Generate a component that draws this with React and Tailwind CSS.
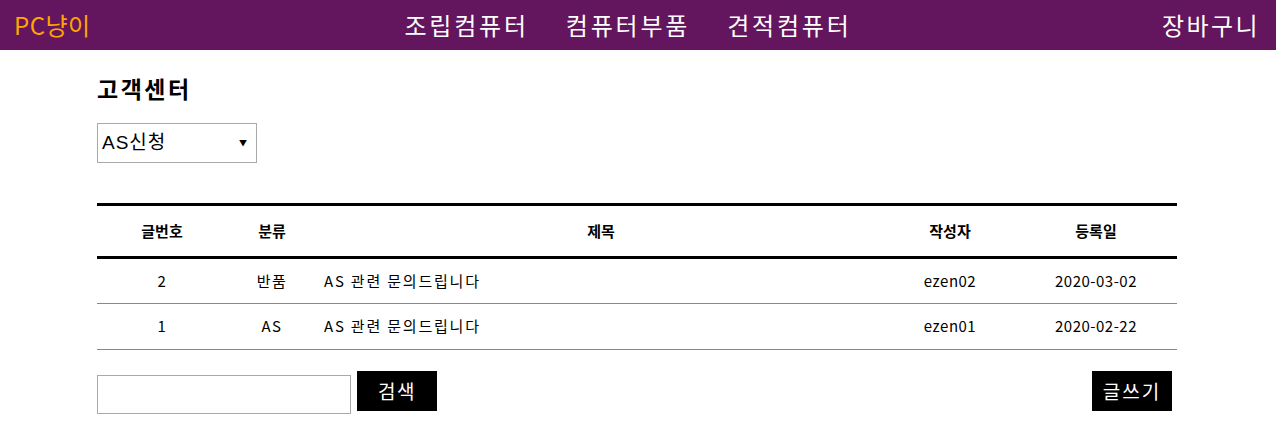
import { useState } from "react";

const posts = [
  { no: 2, category: "반품", title: "AS 관련 문의드립니다", writer: "ezen02", date: "2020-03-02" },
  { no: 1, category: "AS", title: "AS 관련 문의드립니다", writer: "ezen01", date: "2020-02-22" },
];

const font = { fontFamily: '"Noto Sans CJK KR", "Noto Sans", sans-serif' };

const Header = () => (
  <header className="h-[50px] bg-[#63165e] flex items-center px-[14px]">
    <div className="flex-1">
      <a className="text-[24px] leading-[30px] text-[#ffa500] tracking-[0.5px]">PC냥이</a>
    </div>
    <nav className="flex gap-[37px] text-[24px] leading-[30px] text-white tracking-[2.8px] mr-[18px]">
      <a>조립컴퓨터</a>
      <a>컴퓨터부품</a>
      <a>견적컴퓨터</a>
    </nav>
    <div className="flex-1 flex justify-end pr-[2px]">
      <a className="text-[24px] leading-[30px] text-white tracking-[2.4px]">장바구니</a>
    </div>
  </header>
);

export default function App() {
  const [keyword, setKeyword] = useState("");

  return (
    <div className="bg-white min-h-[444px] text-black" style={font}>
      <Header />
      <main className="w-[1080px] ml-[97px]">
        <h2 className="text-[23px] leading-[30px] font-bold tracking-[2.5px] mt-[23px]">고객센터</h2>
        <div className="relative mt-[20px] w-[160px] h-[40px] border border-[#aaaaaa] flex items-center px-[4px]">
          <span
            className="text-[19px] leading-[24px] tracking-[1px]"
            style={{ fontFamily: '"Liberation Sans", "Noto Sans CJK KR", sans-serif' }}
          >
            AS신청
          </span>
          <span className="absolute right-[9px] top-[15px] text-[8px] leading-[8px]">▼</span>
        </div>

        <table className="w-full mt-[40px] border-collapse text-[15px] tracking-[0.5px] table-fixed">
          <colgroup>
            <col className="w-[130px]" />
            <col className="w-[90px]" />
            <col />
            <col className="w-[130px]" />
            <col className="w-[162px]" />
          </colgroup>
          <thead>
            <tr className="border-t-[3px] border-b-[3px] border-black h-[53px]">
              <th className="font-semibold tracking-normal">글번호</th>
              <th className="font-semibold tracking-normal">분류</th>
              <th className="font-semibold tracking-normal">제목</th>
              <th className="font-semibold tracking-normal">작성자</th>
              <th className="font-semibold tracking-normal">등록일</th>
            </tr>
          </thead>
          <tbody>
            {posts.map((p) => (
              <tr key={p.no} className="border-b border-[#888888] h-[46px]">
                <td className="text-center">{p.no}</td>
                <td className="text-center tracking-[1.5px]">{p.category}</td>
                <td className="text-left pl-[7px] tracking-[1.8px]">{p.title}</td>
                <td className="text-center">{p.writer}</td>
                <td className="text-center">{p.date}</td>
              </tr>
            ))}
          </tbody>
        </table>

        <div className="flex items-start justify-between mt-[21px] pr-[5px]">
          <div className="flex items-start gap-[6px]">
            <input
              value={keyword}
              onChange={(e) => setKeyword(e.target.value)}
              className="mt-[4px] w-[254px] h-[39px] border border-[#aaaaaa] outline-none px-2"
            />
            <button className="w-[80px] h-[40px] bg-black text-white text-[19px] leading-[24px] tracking-[1.5px]">검색</button>
          </div>
          <button className="w-[80px] h-[40px] bg-black text-white text-[19px] leading-[24px] tracking-[2px]">글쓰기</button>
        </div>
      </main>
    </div>
  );
}
